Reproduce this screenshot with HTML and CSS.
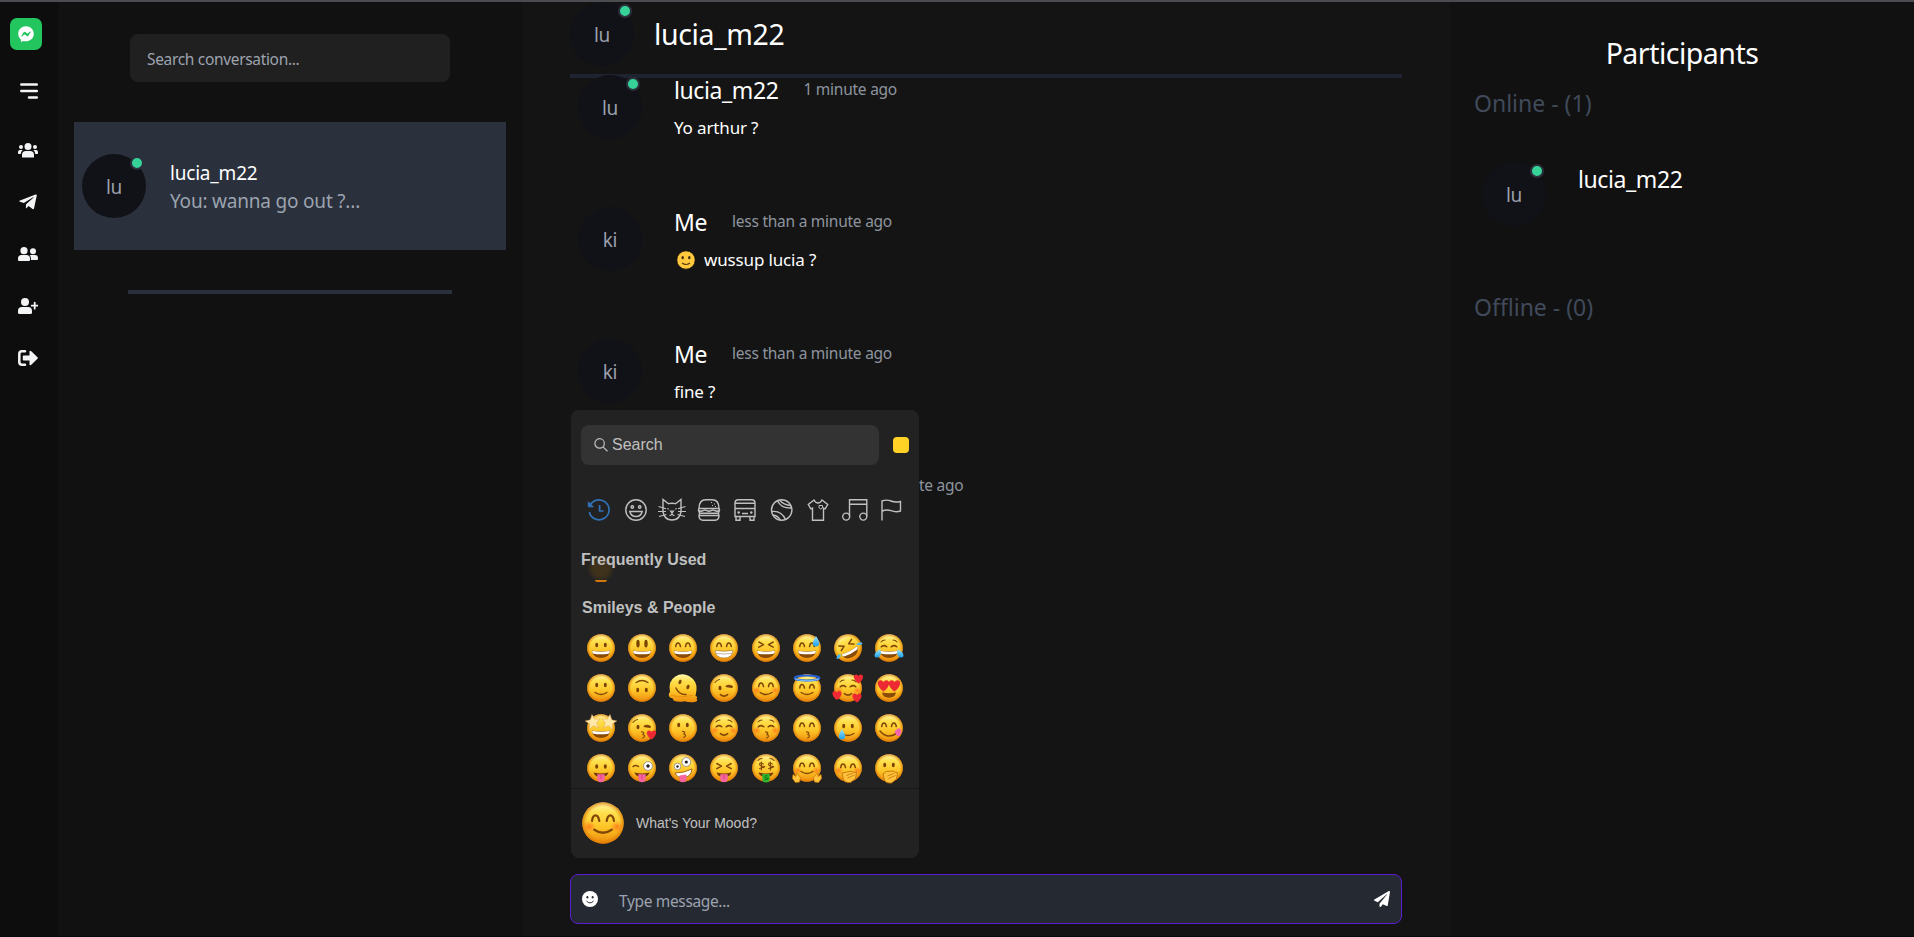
FILE: index.html
```html
<!DOCTYPE html>
<html lang="en">
<head>
<meta charset="utf-8">
<title>Chat</title>
<link rel="stylesheet" href="styles.css">
</head>
<body>
<svg class="defs" aria-hidden="true">
  <defs>
    <linearGradient id="skin" x1="0" y1="0" x2="0" y2="1">
      <stop offset="0" stop-color="#fff7b0"/><stop offset=".25" stop-color="#ffe04d"/><stop offset=".6" stop-color="#fdc527"/><stop offset="1" stop-color="#ee8b0c"/>
    </linearGradient>
    <radialGradient id="rim"><stop offset=".78" stop-color="#e07e05" stop-opacity="0"/><stop offset="1" stop-color="#d97403" stop-opacity=".75"/></radialGradient>
    <radialGradient id="glow"><stop offset="0" stop-color="#ff6a1c" stop-opacity=".75"/><stop offset="1" stop-color="#ff7a1c" stop-opacity="0"/></radialGradient>
    <linearGradient id="drop" x1="0" y1="0" x2="0" y2="1"><stop offset="0" stop-color="#9be3ff"/><stop offset="1" stop-color="#1d9fe8"/></linearGradient>
    <g id="face"><circle cx="16" cy="16" r="13.8" fill="url(#skin)"/><circle cx="16" cy="16" r="13.8" fill="url(#rim)"/></g>
    <g id="eyes" fill="#7a4305"><ellipse cx="11.7" cy="13" rx="1.5" ry="2.2"/><ellipse cx="20.3" cy="13" rx="1.5" ry="2.2"/></g>
    <g id="tall" fill="#7a4305"><ellipse cx="12" cy="11.6" rx="1.7" ry="3.9"/><ellipse cx="20" cy="11.6" rx="1.7" ry="3.9"/></g>
    <g id="arcs" class="ink"><path d="M8.7 14.6q.4-3.7 2.3-3.7t2.5 3.7M18.5 14.6q.5-3.7 2.4-3.7t2.4 3.7"/></g>
    <g id="shut" class="ink"><path d="M8.2 14.8q2.9-2.3 5.6 0M18.2 14.8q2.9-2.3 5.6 0"/></g>
    <g id="brows" class="ink thin"><path d="M8 10q1.5-2 4-2M20 8q2.500 0 4 2"/></g>
    <g id="squint" class="ink"><path d="M8.800 10l4.700 2.600-4.700 2.600M23.200 10l-4.700 2.600 4.700 2.600"/></g>
    <g id="grin"><path d="M6.900 18.500q9.100 1.800 18.200 0q-.8 7.600-9.100 7.600t-9.100-7.600z" fill="#8a4b08"/><path d="M7.200 18.800q8.800 1.700 17.600 0q0 2.300-1.300 2.900q-7.500 1.300-15 0q-1.300-.6-1.300-2.900z" fill="#fff"/></g>
    <g id="teeth"><path d="M7 18.500q9 1.500 18 0q-.7 7.500-9 7.500t-9-7.500z" fill="#fff" stroke="#9b6a2c" stroke-width=".6"/><path d="M7.700 21.300q8.300 1.400 16.600 0" fill="none" stroke="#ad9f87" stroke-width=".8"/></g>
    <path id="smile" class="ink" d="M10.200 20.500q5.800 4 11.600 0"/>
    <path id="tinysmile" class="ink" d="M12.400 21.600q3.600 3 7.200 0"/>
    <path id="kiss" class="ink thin" d="M15.500 18.400q4 .4 1.200 2.600q3.700 1 0 3.500"/>
    <g id="blush" fill="url(#glow)"><ellipse cx="6.700" cy="18.500" rx="4.600" ry="4"/><ellipse cx="25.300" cy="18.500" rx="4.600" ry="4"/></g>
    <g id="tongue"><path d="M8.500 20.600q7.500 1.800 15 0q-1.500 4.500-7.500 4.500t-7.500-4.500z" fill="#70380a"/><path d="M12.300 22.300h7.400v4.300q-.2 3.600-3.700 3.600t-3.700-3.600z" fill="#f864a0"/><path d="M16 23v4" stroke="#c93876" stroke-width=".8"/></g>
    <path id="heart" fill="#ed2934" d="M0 4.600C-6 .3-5.300-4.400-2.300-4.400-.8-4.400 0-2.900 0-2.900S.8-4.400 2.300-4.400C5.300-4.400 6 .3 0 4.600z"/>
    <path id="star" fill="#ffe9a8" stroke="#e2a65a" stroke-width=".4" d="M0-6 1.800-2 6-1.700 2.800 1.200 3.800 5.300 0 3-3.800 5.300-2.800 1.200-6-1.700-1.800-2z"/>
    <g id="wink" class="ink"><path d="M18.300 14.300q2.500-1.800 6 .3M18.800 14.500l5 .800"/><path class="thin" d="M7 10.500q2-2.800 4.500-3"/></g>
    <path id="tear" fill="url(#drop)" d="M0-5.500Q3.600.4 3.200 2.300 2.700 5 0 5T-3.200 2.300Q-3.600.4 0-5.500z"/>
  </defs>
</svg>

<div class="app">
  <nav class="rail">
    <div class="logo"><svg width="16" height="16" viewBox="0 0 512 512" fill="#fff"><path d="M256.550 8C116.520 8 8 110.340 8 248.570c0 72.300 29.710 134.780 78.070 177.940 8.350 7.510 6.630 11.860 8.050 58.230A19.920 19.920 0 0 0 122 502.310c52.910-23.300 53.590-25.140 62.560-22.700C337.850 521.800 504 423.700 504 248.570 504 110.340 396.590 8 256.550 8zm149.240 185.130l-73 115.570a37.370 37.370 0 0 1-53.910 9.930l-58.080-43.470a15 15 0 0 0-18 0l-78.370 59.440c-10.460 7.930-24.160-4.600-17.110-15.670l73-115.570a37.360 37.360 0 0 1 53.910-9.930l58.060 43.460a15 15 0 0 0 18 0l78.410-59.380c10.440-7.980 24.140 4.540 17.090 15.620z"/></svg></div>
    <div class="rail-menu"><svg width="20" height="20" viewBox="0 0 20 20"><path d="M3.300 3.600h15.500M3.300 10h15.500M11 16.500h7.800" stroke="#f3f4f6" stroke-width="2.500" stroke-linecap="round"/></svg></div>
    <a class="rail-item"><svg width="20" height="16" viewBox="0 0 20 16" fill="#f3f4f6"><circle cx="10" cy="4.600" r="3.500"/><circle cx="3" cy="5" r="2"/><circle cx="17" cy="5" r="2"/><path d="M4 15V13q0-4 4-4h4q4 0 4 4v2q0 .6-.6.600H4.600Q4 15.600 4 15zM0 11.300V10q0-2 2-2h2.600Q3 9.500 2.700 12H.7q-.7 0-.7-.7zM20 11.300V10q0-2-2-2h-2.600q1.600 1.500 1.900 4h2q.7 0 .7-.7z"/></svg></a>
    <a class="rail-item"><svg width="18" height="20" viewBox="0 0 448 512" fill="#f3f4f6"><path d="M446.700 98.600l-67.600 318.800c-5.100 22.500-18.400 28.100-37.300 17.500l-103-75.900-49.700 47.800c-5.500 5.500-10.100 10.100-20.700 10.100l7.400-104.900 190.900-172.500c8.300-7.400-1.800-11.500-12.900-4.100L117.800 284 16.200 252.200c-22.100-6.900-22.500-22.100 4.600-32.700L418.200 66.400c18.400-6.900 34.500 4.100 29.500 32.200z"/></svg></a>
    <a class="rail-item"><svg width="20" height="16" viewBox="0 0 20 16" fill="#f3f4f6"><circle cx="6" cy="4.700" r="3.600"/><circle cx="15" cy="5.300" r="3"/><path d="M0 14v-1.400Q0 9 3.600 9h4.800Q12 9 12 12.600V14q0 1-1 1H1q-1 0-1-1zM13 14q.5-3-1.300-4.800Q12.300 9 13 9h4q3 0 3 3.200V13q0 1-1 1z"/></svg></a>
    <a class="rail-item"><svg width="20" height="16" viewBox="0 0 20 16" fill="#f3f4f6"><circle cx="7" cy="4" r="4"/><path d="M0 14.500V13q0-4 4-4h6q4 0 4 4v1.500q0 1.500-1.500 1.500h-11Q0 16 0 14.500z"/><path d="M16.700 4.700v6M13.700 7.700h6" stroke="#f3f4f6" stroke-width="1.800" stroke-linecap="round"/></svg></a>
    <a class="rail-item"><svg width="20" height="16" viewBox="0 0 20 16"><path d="M7 1.300H4Q1.300 1.300 1.300 4v8q0 2.700 2.700 2.700h3" fill="none" stroke="#f3f4f6" stroke-width="2.500" stroke-linecap="round"/><path d="M5.500 5.500h6V1.700q0-1.700 1.500-.7l6.500 6.300q.6.700 0 1.400L13 15q-1.500 1-1.500-.7v-3.800h-6q-.7 0-.7-.7V6.200q0-.7.700-.7z" fill="#f3f4f6"/></svg></a>
  </nav>

  <aside class="conversations">
    <div class="search-box">Search conversation...</div>
    <div class="conversation">
      <div class="avatar">lu<i class="dot"></i></div>
      <div class="conversation-text">
        <div class="conversation-name">lucia_m22</div>
        <div class="conversation-last">You: wanna go out ?...</div>
      </div>
    </div>
    <div class="divider"></div>
  </aside>

  <main class="chat">
    <header class="chat-header">
      <div class="avatar">lu<i class="dot"></i></div>
      <h1>lucia_m22</h1>
    </header>
    <section class="messages">
      <article class="message"><div class="avatar">lu<i class="dot"></i></div><div class="body"><div class="meta"><b>lucia_m22</b><time>1 minute ago</time></div><p>Yo arthur ?</p></div></article>
      <article class="message"><div class="avatar">ki</div><div class="body"><div class="meta"><b>Me</b><time>less than a minute ago</time></div><p><svg class="inline-face" width="24" height="20" viewBox="0 0 24 20"><circle cx="12" cy="10" r="9.200" fill="#ffc83d" stroke="#0a0a0a" stroke-width=".8"/><ellipse cx="8.700" cy="7.700" rx="1.200" ry="1.600" fill="#3a2b14"/><ellipse cx="15.300" cy="7.700" rx="1.200" ry="1.600" fill="#3a2b14"/><path d="M8 13q4 3 8 0" fill="none" stroke="#5c3a10" stroke-width="1.200"/></svg><span>wussup lucia ?</span></p></div></article>
      <article class="message"><div class="avatar">ki</div><div class="body"><div class="meta"><b>Me</b><time>less than a minute ago</time></div><p>fine ?</p></div></article>
      <article class="message"><div class="avatar">lu</div><div class="body"><div class="meta"><b>lucia_m22</b><time>less than a minute ago</time></div></div></article>
    </section>
    <footer class="composer">
      <svg width="16" height="16" viewBox="0 0 16 16"><circle cx="8" cy="8" r="8" fill="#fff"/><ellipse cx="5.400" cy="6.300" rx="1" ry="1.300" fill="#252932"/><ellipse cx="10.600" cy="6.300" rx="1" ry="1.300" fill="#252932"/><path d="M4.500 10q3.500 3.800 7 0" fill="none" stroke="#252932" stroke-width="1"/></svg>
      <span class="composer-text">Type message...</span>
      <svg width="16" height="16" viewBox="0 0 512 512" fill="#fff"><path d="M476 3.200L12.500 270.600c-18.100 10.400-15.800 35.600 2.200 43.200L121 358.400l287.300-253.200c5.500-4.900 13.300 2.600 8.600 8.300L176 407v80.500c0 23.600 28.500 32.900 42.500 15.800L282 426l124.600 52.200c14.200 6 30.400-2.900 33-18.200l72-432C515 7.800 493.300-6.800 476 3.200z"/></svg>
    </footer>

    <div class="picker">
      <div class="picker-top">
        <div class="picker-search"><svg width="14" height="14" viewBox="0 0 14 14" fill="none" stroke="#c0c0c0" stroke-width="1.200"><circle cx="5.600" cy="5.400" r="4.700"/><path d="M9 8.900l4.500 4.400"/></svg><span>Search</span></div>
        <i class="tone"></i>
      </div>
      <div class="tabs">
        <svg class="tab active" viewBox="0 0 28 24"><path d="M4.700 8.300A10 10 0 1 1 4.300 14M14.600 7v6h4" stroke-width="1.700"/><path d="M3.300 3.800v5h5z" fill="#3271b7" stroke-width="1"/></svg>
        <svg class="tab" viewBox="0 0 28 24"><circle cx="14" cy="12" r="10.200"/><circle cx="10.300" cy="9" r="1.200"/><circle cx="17.700" cy="9" r="1.200"/><path d="M7.800 13.500h12.400q-1.200 5-6.200 5t-6.200-5z"/></svg>
        <svg class="tab" viewBox="0 0 28 24"><path d="M5 14V1.500l5.500 4.200q3.500-1 7 0L23 1.500V14q-1.500 8-9 8T5 14z"/><path d="M.5 8.500l7.500 2.300M0 13.500h8M1 18.500l7.500-2M27.500 8.500L20 10.800M28 13.500h-8M27 18.500l-7.500-2M10 10v1.500M18 10v1.500M12.500 13h3L14 15zM14 15q0 2.500-2.500 2.300M14 15q0 2.500 2.500 2.300" stroke-width="1.200"/></svg>
        <svg class="tab" viewBox="0 0 28 24"><path d="M4 10.500Q4 1.800 11 1.800h6q7 0 7 8.700zM4 17.500h20q0 4.700-4 4.700H8q-4 0-4-4.700zM4 12.700q2 1.200 4 0t4 0 4 0 4 0 4 0M4 15.200h20M4 10.500Q3 12 4 13.500T4 17.500M24 10.500q1 1.500 0 3t0 4"/><path d="M16 4.500h1M19 6h1M17 7.500h1M20 8.500h1" stroke-width="1"/></svg>
        <svg class="tab" viewBox="0 0 28 24"><path d="M4 18.500V5q0-3.200 3.200-3.200h13.600Q24 1.800 24 5v13.500zM4 10.500h20M4.500 5.300h19M5 18.500v3.700h4v-3.700M19 18.500v3.700h4v-3.700M11 15.500h6"/><circle cx="7.700" cy="14.500" r=".6"/><circle cx="20.300" cy="14.500" r=".6"/></svg>
        <svg class="tab" viewBox="0 0 28 24"><circle cx="13.700" cy="12" r="10.200"/><path d="M9.500 2.700Q13 10.500 23.800 10M4 13.500q9.500-1 13.500 8M11.500 2q4 5 11.500 5.500M4.800 17q5 .5 7.500 5"/></svg>
        <svg class="tab" viewBox="0 0 28 24"><path d="M10 2L4.300 6.500l2.500 4.300L8.500 10v12.200h11V10l1.700.8 2.500-4.300L18 2q-1.500 3-4 3t-4-3z"/><path d="M15 7.500h3.500v2.200L16.700 11 15 9.700z" stroke-width="1"/></svg>
        <svg class="tab" viewBox="0 0 28 24"><path d="M8.500 18.300V1.800h17.300v16.500M8.500 6.300h17.300"/><circle cx="5.200" cy="18.600" r="3.500"/><circle cx="22.300" cy="18.600" r="3.500"/></svg>
        <svg class="tab" viewBox="0 0 28 24"><path d="M5 22.500V3q4.500-1.800 9 0t9.500.5V13q-4.500 1.500-9.500-.3t-9 .6"/></svg>
      </div>
      <h2 class="frequent"><i class="ghost"></i><span>Frequently Used</span></h2>
      <h2 class="smileys">Smileys &amp; People</h2>
      <div class="grid">
        <svg viewBox="0 0 32 32"><use href="#face"/><use href="#eyes"/><use href="#grin"/></svg>
        <svg viewBox="0 0 32 32"><use href="#face"/><use href="#tall"/><use href="#grin"/></svg>
        <svg viewBox="0 0 32 32"><use href="#face"/><use href="#arcs"/><use href="#grin"/></svg>
        <svg viewBox="0 0 32 32"><use href="#face"/><use href="#arcs"/><use href="#teeth"/></svg>
        <svg viewBox="0 0 32 32"><use href="#face"/><use href="#squint"/><use href="#grin"/></svg>
        <svg viewBox="0 0 32 32"><use href="#face"/><use href="#arcs"/><use href="#grin"/><use href="#tear" x="25" y="9.500"/></svg>
        <svg viewBox="0 0 32 32"><g transform="rotate(-28 16 16)"><use href="#face"/><use href="#squint"/><use href="#grin"/></g><path d="M24 12.500q3.500-3.500 6.700-1.500-1.700 3.500-6.700 1.500zM4.500 27q0-4.500 4-5 1 4.500-4 5z" fill="#4bb9f0"/></svg>
        <svg viewBox="0 0 32 32"><use href="#face"/><use href="#shut"/><use href="#brows"/><use href="#grin"/><path d="M1.500 24q0-5 6-6.500 1.500 7-3 8-2.500.3-3-1.500zM30.500 24q0-5-6-6.500-1.500 7 3 8 2.500.3 3-1.500z" fill="url(#drop)"/></svg>

        <svg viewBox="0 0 32 32"><use href="#face"/><use href="#eyes"/><use href="#smile"/></svg>
        <svg viewBox="0 0 32 32"><use href="#face"/><g transform="rotate(180 16 15.500)"><use href="#eyes"/><use href="#smile"/></g></svg>
        <svg viewBox="0 0 32 32"><path d="M3 20Q1 9 8 4.700q7-4.500 14-.7 8.500 5 7.500 14l-1 6q3 1 1 2.500 2 3-2 3.500-5 .8-10-.8-6 1.500-11-.6 0-2.300-3.500-3-2.500-3 0-5.600z" fill="url(#skin)"/><g class="ink"><path d="M9 16q3 7 10 6.500"/></g><ellipse cx="13" cy="10" rx="1.500" ry="2.300" fill="#7a4305" transform="rotate(20 13 10)"/><ellipse cx="21" cy="15" rx="1.500" ry="2.300" fill="#7a4305" transform="rotate(20 21 15)"/><path d="M4 23q8 3 22 .5" fill="none" stroke="#e38a12" stroke-width=".8"/></svg>
        <svg viewBox="0 0 32 32"><use href="#face"/><use href="#wink"/><ellipse cx="12" cy="16" rx="1.500" ry="2.200" fill="#7a4305"/><use href="#tinysmile" y="1"/></svg>
        <svg viewBox="0 0 32 32"><use href="#face"/><use href="#blush"/><use href="#arcs"/><use href="#smile"/></svg>
        <svg viewBox="0 0 32 32"><use href="#face"/><use href="#arcs" y="1.500"/><use href="#smile"/><ellipse cx="16" cy="6" rx="12.500" ry="2.600" fill="none" stroke="#2463d8" stroke-width="2"/><path d="M4 6.800q12 4 24 0" fill="none" stroke="#77b7ff" stroke-width="1.300"/></svg>
        <svg viewBox="0 0 32 32"><use href="#face"/><use href="#blush"/><use href="#shut"/><use href="#brows"/><use href="#tinysmile"/><use href="#heart" transform="translate(26.500 7)"/><use href="#heart" transform="translate(5 23.500)"/><use href="#heart" transform="translate(25 26)"/></svg>
        <svg viewBox="0 0 32 32"><use href="#face"/><use href="#heart" transform="translate(10.500 13.800) scale(1.250)"/><use href="#heart" transform="translate(21.500 13.800) scale(1.250)"/><path d="M9 20.500q7 1.500 14 0-1 5.200-7 5.200t-7-5.200z" fill="#8a4b08"/></svg>

        <svg viewBox="0 0 32 32"><use href="#face"/><use href="#grin"/><use href="#star" transform="translate(8 10) rotate(-8) scale(1.250)"/><use href="#star" transform="translate(24 10) rotate(8) scale(1.250)"/></svg>
        <svg viewBox="0 0 32 32"><use href="#face"/><use href="#wink"/><ellipse cx="12" cy="15" rx="1.500" ry="2.200" fill="#7a4305"/><use href="#kiss" y="1.500"/><use href="#heart" transform="translate(25.500 23)"/></svg>
        <svg viewBox="0 0 32 32"><use href="#face"/><use href="#eyes"/><use href="#kiss" y="1"/></svg>
        <svg viewBox="0 0 32 32"><use href="#face"/><use href="#blush"/><use href="#shut"/><use href="#brows"/><use href="#tinysmile"/></svg>
        <svg viewBox="0 0 32 32"><use href="#face"/><use href="#blush"/><use href="#shut"/><use href="#brows"/><use href="#kiss" y="1.500"/></svg>
        <svg viewBox="0 0 32 32"><use href="#face"/><use href="#arcs"/><use href="#kiss" y="1.500"/></svg>
        <svg viewBox="0 0 32 32"><use href="#face"/><use href="#eyes" y="1"/><use href="#smile" y="1"/><use href="#tear" x="10" y="22.500"/></svg>
        <svg viewBox="0 0 32 32"><use href="#face"/><use href="#arcs"/><path class="ink" d="M7 19q7 8.500 16.500 2.500"/><path d="M21.500 19.500l4-3.500q4 2 2.500 5.500t-4 2.500z" fill="#f365ad"/></svg>

        <svg viewBox="0 0 32 32"><use href="#face"/><use href="#eyes" y="1.500"/><use href="#tongue"/></svg>
        <svg viewBox="0 0 32 32"><use href="#face"/><path class="ink" d="M7 14.500q2.500-2 5.500 0"/><circle cx="22" cy="14" r="4.400" fill="#fff" stroke="#888" stroke-width=".8"/><circle cx="22" cy="14" r="1.700" fill="#222"/><use href="#tongue"/></svg>
        <svg viewBox="0 0 32 32"><use href="#face"/><circle cx="10.500" cy="14.500" r="3.300" fill="#fff" stroke="#888" stroke-width=".8"/><circle cx="10.500" cy="14.500" r="1.200" fill="#222"/><circle cx="19.300" cy="10" r="4.400" fill="#fff" stroke="#888" stroke-width=".8"/><circle cx="19.300" cy="10" r="1.600" fill="#222"/><path d="M8 21q9 0 17-4-1 8-8 8.500T8 21z" fill="#fff" stroke="#8a4b08" stroke-width=".8"/><path d="M12.500 23.500l7-1v4q0 3.500-3.500 3.700t-3.500-3.200z" fill="#f864a0"/></svg>
        <svg viewBox="0 0 32 32"><use href="#face"/><use href="#squint" y="1.500"/><use href="#tongue"/></svg>
        <svg viewBox="0 0 32 32"><use href="#face"/><use href="#brows" y="-1.500"/><path d="M8.500 20.500q7.500 1.800 15 0-1.500 4.500-7.500 4.500t-7.500-4.500z" fill="#70380a"/><path d="M12.300 22h7.400v5q-.2 3.500-3.700 3.500T12.300 27z" fill="#2fb72f"/><g class="ink thin"><path d="M13.300 12q-3.500-2-3.700 0t3.700 2.300-3.700 2.200M11.400 10v8M22.300 12q-3.500-2-3.700 0t3.700 2.300-3.700 2.200M20.400 10v8"/></g><path d="M17.500 24q-2.500-1-2.800.5t2.800 1.800-2.800 1.500" fill="none" stroke="#0c6a12" stroke-width=".9"/></svg>
        <svg viewBox="0 0 32 32"><use href="#face"/><use href="#blush"/><use href="#arcs"/><use href="#smile" y="-1"/><path d="M2 22.500l3 2 .500-3.500 4 4.500-1 4.500-4 .5-3-4zM30 22.500l-3 2-.5-3.500-4 4.500 1 4.500 4 .5 3-4z" fill="#ffc43a" stroke="#c97909" stroke-width=".7"/></svg>
        <svg viewBox="0 0 32 32"><use href="#face"/><use href="#blush"/><use href="#arcs" y="1"/><path d="M10 21l10-2 1.500 1.500 3-.5-1 6.500-5 4q-6 .5-7-3z" fill="#ffc03a" stroke="#b96c08" stroke-width=".8"/><path d="M14.500 23.500l6.500-2.500M15.500 26l7-3" stroke="#b96c08" stroke-width=".7"/></svg>
        <svg viewBox="0 0 32 32"><use href="#face"/><use href="#eyes"/><path d="M10 22l3-2.500 8-.5 1 1.500 2.500 0-1 6.500-5 4q-6 .5-7-3z" fill="#ffc03a" stroke="#b96c08" stroke-width=".8"/><path d="M14.500 24l6.500-2.500M15.500 26.500l7-3" stroke="#b96c08" stroke-width=".7"/></svg>
      </div>
      <div class="mood">
        <svg width="42" height="42" viewBox="2 2 28 28"><use href="#face"/><use href="#blush"/><use href="#arcs"/><use href="#smile"/></svg>
        <span>What's Your Mood?</span>
      </div>
    </div>
  </main>

  <aside class="participants">
    <h2>Participants</h2>
    <h3>Online - (1)</h3>
    <div class="participant"><div class="avatar">lu<i class="dot"></i></div><span>lucia_m22</span></div>
    <h3>Offline - (0)</h3>
  </aside>
</div>
</body>
</html>
```
FILE: styles.css
```css
* { box-sizing: border-box; }
html, body { height: 100%; }
body {
  margin: 0;
  overflow: hidden;
  background: #111;
  color: #fff;
  font-family: "Segoe UI", "Noto Sans", "Open Sans", sans-serif;
  letter-spacing: -0.018em;
}
h1, h2, h3, p { margin: 0; font-weight: 400; }
svg { display: block; flex: none; }
.defs { position: absolute; width: 0; height: 0; }
.ink { fill: none; stroke: #804707; stroke-width: 1.5; stroke-linecap: round; stroke-linejoin: round; }
.thin { stroke-width: 1.100; }

.app { display: flex; height: 937px; border-top: 2px solid #4b4b50; border-bottom: 1px solid #0a0a0a; }

.rail { width: 58px; flex: none; background: #0d0d0d; display: flex; flex-direction: column; padding: 16px 0 0 10px; }
.logo { width: 32px; height: 32px; border-radius: 7px; background: #22c55e; display: flex; align-items: center; justify-content: center; }
.rail-menu { width: 36px; height: 22px; margin: 30px 0 22px; padding-left: 8px; display: flex; align-items: center; }
.rail-item { width: 36px; height: 52px; display: flex; align-items: center; justify-content: center; }

.conversations { width: 464px; flex: none; background: #111; padding: 32px 16px 0; }
.search-box { width: 320px; height: 48px; margin: 0 auto; padding: 0 17px; border-radius: 8px; background: #202020; color: #9ca3af; font-size: 15.500px; line-height: 51px; letter-spacing: -.33px; }
.conversation { height: 128px; margin-top: 40px; padding: 0 8px; background: #2a303c; display: flex; align-items: center; }
.conversation-text { margin-left: 24px; padding-top: 2px; }
.conversation-name { font-size: 19px; line-height: 28px; letter-spacing: -.2px; }
.conversation-last { font-size: 19px; line-height: 28px; color: #9ca3af; letter-spacing: -.2px; }
.divider { width: 324px; height: 4px; margin: 40px auto 0; background: #2a303c; }

.avatar { position: relative; width: 64px; height: 64px; flex: none; border-radius: 50%; background: #111218; color: #9a9fab; font-size: 19px; line-height: 26px; padding-top: 1px; display: flex; align-items: center; justify-content: center; }
.dot { position: absolute; top: 2px; right: 2px; width: 14px; height: 14px; border: 2px solid #2a303c; border-radius: 50%; background: #36d399; }

.chat { position: relative; width: 928px; flex: none; padding: 0 48px; background: #141414; display: flex; flex-direction: column; }
.chat-header { height: 76px; flex: none; border-bottom: 4px solid #1f2330; display: flex; align-items: flex-start; }
.chat-header h1 { margin-left: 20px; font-size: 28.500px; line-height: 40px; padding-top: 12px; letter-spacing: -.400px; }
.messages { flex: 1; min-height: 0; padding-left: 8px; }
.message { display: flex; height: 132px; }
.message .avatar { margin-top: -3px; }
.body { margin-left: 32px; }
.meta { display: flex; align-items: flex-start; gap: 25px; height: 32px; }
.meta b { font-weight: 400; font-size: 23px; line-height: 24px; letter-spacing: -.400px; }
.meta time { color: #8e949f; font-size: 15.500px; line-height: 23px; letter-spacing: -.250px; }
.body p { font-size: 17px; line-height: 36px; display: flex; align-items: center; letter-spacing: -.150px; }
.inline-face { margin-right: 6px; }
.composer { height: 50px; flex: none; margin-bottom: 12px; padding: 0 11px 0 11px; border: 1px solid #5b1bd0; border-radius: 8px; background: #252932; display: flex; align-items: center; }
.composer-text { flex: 1; padding: 3px 0 0 21px; color: #9ca3af; font-size: 15.500px; letter-spacing: -.350px; }

.picker { position: absolute; left: 49px; top: 408px; width: 348px; height: 448px; overflow: hidden; border-radius: 8px; background: #222; color: #c0c0c0; font-family: "Liberation Sans", Arial, sans-serif; letter-spacing: 0; }
.picker-top { display: flex; align-items: center; padding: 15px 10px 0; }
.picker-search { width: 298px; height: 40px; padding-left: 13px; border-radius: 8px; background: #333; display: flex; align-items: center; gap: 4px; font-size: 16px; }
.tone { width: 16px; height: 16px; margin-left: 14px; border-radius: 4px; background: #ffd225; }
.tabs { display: flex; gap: 8.500px; margin: 33px 0 0 14px; }
.tab { width: 28px; height: 24px; fill: none; stroke: #c0c0c0; stroke-width: 1.400; }
.tab.active { stroke: #3271b7; }
.picker h2 { font-size: 16px; font-weight: 700; line-height: 20px; }
.frequent { position: relative; margin: 28px 0 0 10px; }
.frequent span { position: relative; }
.ghost { position: absolute; left: 6px; top: 4px; width: 28px; height: 28px; border-radius: 50%; background: radial-gradient(circle, rgba(130, 85, 10, .3) 40%, rgba(130, 85, 10, 0) 72%); }
.ghost::after { content: ""; position: absolute; left: 8px; bottom: 0; width: 12px; height: 2px; border-radius: 0 0 6px 6px; background: #cf7606; }
.smileys { margin: 28px 0 0 11px; }
.grid { display: grid; grid-template-columns: repeat(8, 41.140px); grid-auto-rows: 40px; justify-items: center; align-items: center; margin: 10px 0 0 9.500px; height: 160px; }
.grid svg { width: 32px; height: 32px; overflow: visible; }
.mood { height: 70px; border-top: 1px solid #171717; padding: 0 0 1px 11px; display: flex; align-items: center; gap: 12px; font-size: 14px; }

.participants { flex: 1; background: #111; padding: 30px 24px 0; }
.participants h2 { font-size: 28.500px; line-height: 43px; height: 44px; text-align: center; letter-spacing: -.5px; }
.participants h3 { font-size: 23px; line-height: 32px; color: #404a5a; padding-top: 11px; letter-spacing: 0; }
.participant { display: flex; height: 161px; padding: 43px 0 0 8px; }
.participant span { margin-left: 32px; padding-top: 1px; font-size: 23px; line-height: 32px; letter-spacing: -.400px; }
```
